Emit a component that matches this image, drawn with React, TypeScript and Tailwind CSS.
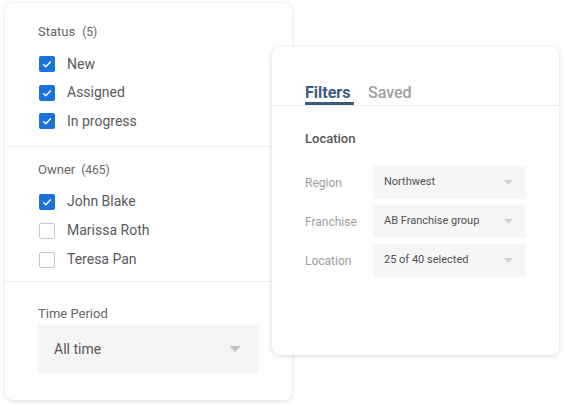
import React from "react";

const font = { fontFamily: "Roboto, 'Noto Sans', sans-serif" };

function Check({ on }: { on: boolean }) {
  if (on)
    return (
      <span className="flex h-[16px] w-[16px] items-center justify-center rounded-[2px] bg-[#1a73d9]">
        <svg width="12" height="12" viewBox="0 0 12 12">
          <path d="M2.3 6.3 L4.8 8.7 L9.8 3.4" fill="none" stroke="#fff" strokeWidth="1.4" />
        </svg>
      </span>
    );
  return <span className="box-border block h-[16px] w-[16px] rounded-[2px] border-[1.5px] border-[#c8c8c8] bg-white" />;
}

function Row({ on, label, h }: { on: boolean; label: string; h: string }) {
  return (
    <div className={`flex items-center ${h}`}>
      <span className="ml-[1px] block">
        <Check on={on} />
      </span>
      <span className="ml-[12px] text-[14px] text-[#5a5a5a]">{label}</span>
    </div>
  );
}

function Arrow({ w, h, c }: { w: number; h: number; c: string }) {
  return (
    <svg width={w} height={h} viewBox={`0 0 ${w} ${h}`}>
      <path d={`M0 0 L${w} 0 L${w / 2} ${h} Z`} fill={c} />
    </svg>
  );
}

function SmallSelect({ label, value }: { label: string; value: string }) {
  return (
    <div className="flex items-center">
      <span className="w-[68px] text-[12px] text-[#9e9e9e]">{label}</span>
      <div className="flex h-[33px] w-[153px] items-center justify-between bg-[#f6f6f6] pl-[11px] pr-[13px]">
        <span className="text-[11px] text-[#505050]">{value}</span>
        <Arrow w={9} h={5} c="#d0d0d0" />
      </div>
    </div>
  );
}

export default function App() {
  return (
    <div className="relative h-[407px] w-[565px] overflow-hidden bg-white" style={font}>
      <div className="ml-[5px] mt-[3px] h-[397px] w-[287px] rounded-[8px] bg-white shadow-[0_1px_4px_rgba(0,0,0,0.14)]">
        <div className="h-[144px] border-b border-[#eeeeee] px-[33px] pt-[19px]">
          <div className="flex h-[20px] items-center text-[13px] text-[#666]">
            Status<span className="ml-[7px] text-[12px]">(5)</span>
          </div>
          <div className="mt-[8px]">
            <Row on label="New" h="h-[28.5px]" />
            <Row on label="Assigned" h="h-[28.5px]" />
            <Row on label="In progress" h="h-[28.5px]" />
          </div>
        </div>
        <div className="h-[135px] border-b border-[#eeeeee] px-[33px] pt-[13px]">
          <div className="flex h-[20px] items-center text-[13px] text-[#666]">
            Owner<span className="ml-[6px] text-[12px]">(465)</span>
          </div>
          <div className="mt-[7px]">
            <Row on label="John Blake" h="h-[29px]" />
            <Row on={false} label="Marissa Roth" h="h-[29px]" />
            <Row on={false} label="Teresa Pan" h="h-[29px]" />
          </div>
        </div>
        <div className="px-[33px] pt-[22px]">
          <div className="flex h-[20px] items-center text-[13px] text-[#666]">Time Period</div>
          <div className="mt-[1px] flex h-[48px] items-center justify-between bg-[#f5f5f5] pl-[16px] pr-[18px]">
            <span className="text-[14px] text-[#555]">All time</span>
            <Arrow w={12} h={6} c="#c4c4c4" />
          </div>
        </div>
      </div>

      <div className="absolute left-[272px] top-[47px] h-[308px] w-[287px] rounded-[8px] bg-white shadow-[0_1px_5px_rgba(0,0,0,0.16)]">
        <div className="flex h-[59px] items-end border-b border-[#ececec] px-[33px]">
          <div className="flex flex-col">
            <span className="text-[16px] font-bold leading-[18px] text-[#3f5a80]">Filters</span>
            <span className="h-[3px] w-[49px] bg-[#3f5a80]" />
          </div>
          <span className="mb-[3px] ml-[14px] text-[16px] font-medium leading-[18px] text-[#9e9e9e]">Saved</span>
        </div>
        <div className="px-[33px] pt-[25px]">
          <div className="flex h-[16px] items-center text-[13px] font-medium text-[#555]">Location</div>
          <div className="mt-[19px] flex flex-col gap-[6px]">
            <SmallSelect label="Region" value="Northwest" />
            <SmallSelect label="Franchise" value="AB Franchise group" />
            <SmallSelect label="Location" value="25 of 40 selected" />
          </div>
        </div>
      </div>
    </div>
  );
}
